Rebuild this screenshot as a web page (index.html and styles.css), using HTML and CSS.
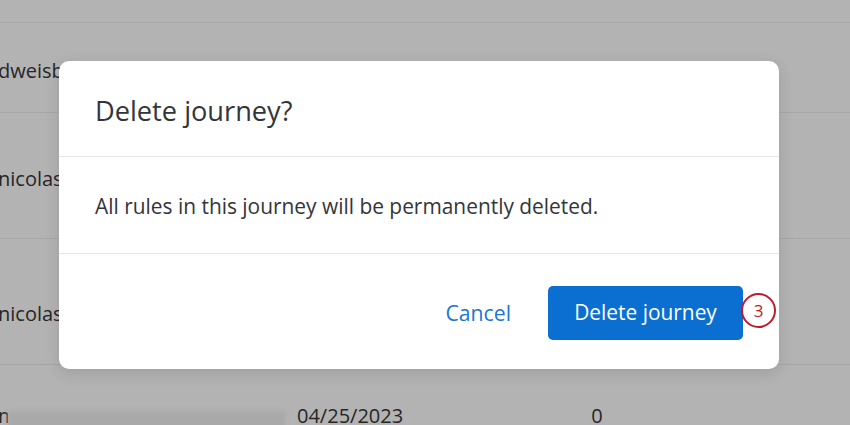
FILE: index.html
```html
<!DOCTYPE html>
<html>
<head>
<meta charset="utf-8">
<link rel="stylesheet" href="styles.css">
</head>
<body>
<div class="page">
  <div class="row row-top"></div>
  <div class="row row-a"><span class="cell name">dweisb</span></div>
  <div class="row row-b"><span class="cell name">nicolas</span></div>
  <div class="row row-b"><span class="cell name">nicolas</span></div>
  <div class="row row-last">
    <span class="cell first">m</span>
    <span class="blur"></span>
    <span class="cell date">04/25/2023</span>
    <span class="cell count">0</span>
  </div>
</div>

<div class="modal">
  <div class="modal-header">Delete journey?</div>
  <div class="modal-body">All rules in this journey will be permanently deleted.</div>
  <div class="modal-footer">
    <button class="btn-link">Cancel</button>
    <button class="btn-primary">Delete journey</button>
    <span class="badge">3</span>
  </div>
</div>
</body>
</html>
```

FILE: styles.css
```css
html, body {
  margin: 0;
  padding: 0;
}
body {
  width: 850px;
  height: 425px;
  overflow: hidden;
  background: #b3b3b3;
  font-family: "Open Sans", "Liberation Sans", sans-serif;
  position: relative;
}
.page {
  display: flex;
  flex-direction: column;
  color: #262626;
  font-size: 20px;
}
.row {
  border-bottom: 1px solid #a7a7a7;
  display: flex;
  align-items: center;
  box-sizing: border-box;
}
.row-top { height: 23px; }
.row-a { height: 90px; padding-top: 6px; }
.row-b { height: 126px; padding-top: 6px; }
.row-b + .row-b { padding-top: 24px; }
.row-last {
  height: 80px;
  border-bottom: none;
  position: relative;
  padding-top: 20px;
}
.cell { white-space: nowrap; }
.name { margin-left: -2px; }
.first { margin-left: -2px; width: 10px; overflow: hidden; }
.blur {
  width: 277px;
  height: 22px;
  margin-top: 14px;
  background: #a9a9a9;
  filter: blur(2px);
}
.date { margin-left: 12px; }
.count { margin-left: 188px; }

.modal {
  position: absolute;
  left: 59px;
  top: 61px;
  width: 720px;
  height: 308px;
  background: #fff;
  border-radius: 10px;
  box-shadow: 0 4px 16px rgba(0, 0, 0, 0.12);
  display: flex;
  flex-direction: column;
  color: #32363a;
}
.modal-header {
  height: 96px;
  box-sizing: border-box;
  padding: 3px 36px 0;
  display: flex;
  align-items: center;
  font-size: 27.2px;
  border-bottom: 1px solid #e6e6e6;
}
.modal-body {
  height: 97px;
  box-sizing: border-box;
  padding: 2px 36px 0;
  display: flex;
  align-items: center;
  font-size: 20.9px;
  border-bottom: 1px solid #e6e6e6;
}
.modal-footer {
  flex: 1;
  display: flex;
  align-items: flex-start;
  justify-content: flex-end;
  padding: 32px 0 0 0;
  position: relative;
}
.btn-link {
  background: none;
  border: none;
  font-family: inherit;
  font-size: 21.2px;
  color: #1c75d3;
  padding: 0;
  margin-top: 12px;
  margin-right: 37px;
  cursor: pointer;
}
.btn-primary {
  width: 195px;
  height: 54px;
  background: #0b6ed1;
  border: none;
  border-radius: 5px;
  color: #fff;
  font-family: inherit;
  font-size: 20.9px;
  padding: 0 0 2px;
  margin-right: 36px;
}
.badge {
  position: absolute;
  left: 682px;
  top: 39px;
  width: 31px;
  height: 31px;
  border: 2.5px solid #c01a2c;
  border-radius: 50%;
  background: #fff;
  color: #c01a2c;
  font-size: 17px;
  display: flex;
  align-items: center;
  justify-content: center;
  line-height: 1;
}
```
